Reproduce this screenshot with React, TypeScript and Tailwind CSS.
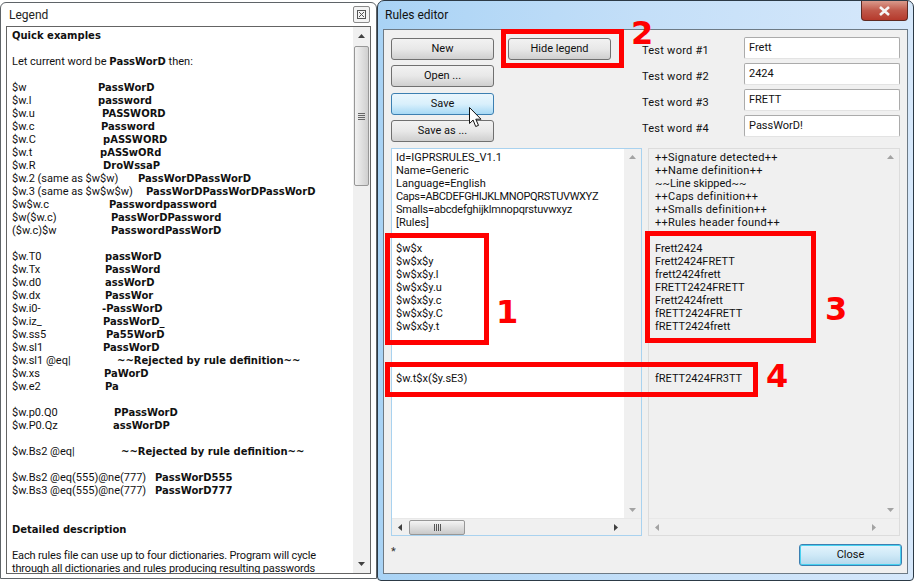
import React from 'react';

const legendRows: Array<{ label?: string; value?: string; w?: string }> = [
  { label: '$w', value: 'PassWorD', w: 'w-[86px]' },
  { label: '$w.l', value: 'password', w: 'w-[86px]' },
  { label: '$w.u', value: 'PASSWORD', w: 'w-[90px]' },
  { label: '$w.c', value: 'Password', w: 'w-[89px]' },
  { label: '$w.C', value: 'pASSWORD', w: 'w-[91px]' },
  { label: '$w.t', value: 'pASSwORd', w: 'w-[88px]' },
  { label: '$w.R', value: 'DroWssaP', w: 'w-[91px]' },
  { label: '$w.2 (same as $w$w)', value: 'PassWorDPassWorD', w: 'w-[126px]' },
  { label: '$w.3 (same as $w$w$w)', value: 'PassWorDPassWorDPassWorD', w: 'w-[134px]' },
  { label: '$w$w.c', value: 'Passwordpassword', w: 'w-[97px]' },
  { label: '$w($w.c)', value: 'PassWorDPassword', w: 'w-[99px]' },
  { label: '($w.c)$w', value: 'PasswordPassWorD', w: 'w-[99px]' },
  {},
  { label: '$w.T0', value: 'passWorD', w: 'w-[93px]' },
  { label: '$w.Tx', value: 'PassWord', w: 'w-[93px]' },
  { label: '$w.d0', value: 'assWorD', w: 'w-[93px]' },
  { label: '$w.dx', value: 'PassWor', w: 'w-[93px]' },
  { label: '$w.i0-', value: '-PassWorD', w: 'w-[90px]' },
  { label: '$w.iz_', value: 'PassWorD_', w: 'w-[91px]' },
  { label: '$w.ss5', value: 'Pa55WorD', w: 'w-[94px]' },
  { label: '$w.sl1', value: 'PassWorD', w: 'w-[91px]' },
  { label: '$w.sl1 @eq|', value: '~~Rejected by rule definition~~', w: 'w-[105px]' },
  { label: '$w.xs', value: 'PaWorD', w: 'w-[92px]' },
  { label: '$w.e2', value: 'Pa', w: 'w-[93px]' },
  {},
  { label: '$w.p0.Q0', value: 'PPassWorD', w: 'w-[102px]' },
  { label: '$w.P0.Qz', value: 'assWorDP', w: 'w-[101px]' },
  {},
  { label: '$w.Bs2 @eq|', value: '~~Rejected by rule definition~~', w: 'w-[109px]' },
  {},
  { label: '$w.Bs2 @eq(555)@ne(777)', value: 'PassWorD555', w: 'w-[143px]' },
  { label: '$w.Bs3 @eq(555)@ne(777)', value: 'PassWorD777', w: 'w-[143px]' },
];

const ruleLines = [
  'Id=IGPRSRULES_V1.1',
  'Name=Generic',
  'Language=English',
  'Caps=ABCDEFGHIJKLMNOPQRSTUVWXYZ',
  'Smalls=abcdefghijklmnopqrstuvwxyz',
  '[Rules]',
  '',
  '$w$x',
  '$w$x$y',
  '$w$x$y.l',
  '$w$x$y.u',
  '$w$x$y.c',
  '$w$x$y.C',
  '$w$x$y.t',
  '',
  '',
  '',
  '$w.t$x($y.sE3)',
];

const resultLines = [
  '++Signature detected++',
  '++Name definition++',
  '~~Line skipped~~',
  '++Caps definition++',
  '++Smalls definition++',
  '++Rules header found++',
  '',
  'Frett2424',
  'Frett2424FRETT',
  'frett2424frett',
  'FRETT2424FRETT',
  'Frett2424frett',
  'fRETT2424FRETT',
  'fRETT2424frett',
  '',
  '',
  '',
  'fRETT2424FR3TT',
];

const boldText = "font-['DejaVu_Sans',sans-serif] text-[10px] font-bold";

const Arrow = ({ dir, dim }: { dir: 'up' | 'down' | 'left' | 'right'; dim?: boolean }) => {
  const points = {
    up: '1,6 4.5,2 8,6',
    down: '1,3 4.5,7 8,3',
    left: '6,1 2,4.5 6,8',
    right: '3,1 7,4.5 3,8',
  }[dir];
  return (
    <svg width="9" height="9" viewBox="0 0 9 9">
      <polygon points={points} fill={dim ? '#a3a3a3' : '#404040'} />
    </svg>
  );
};

const Button = ({ label, state, className }: { label: string; state?: 'hot' | 'default'; className?: string }) => {
  const look =
    state === 'hot'
      ? 'border-[#3c7fb1] from-[#eaf6fd] via-[#d9f0fc] to-[#a7d9f5]'
      : state === 'default'
        ? 'border-[#3c7fb1] from-[#e4f4fc] via-[#cfe9f7] to-[#b4d8ec] shadow-[inset_0_0_0_1px_#48d1f0]'
        : 'border-[#707070] from-[#f2f2f2] via-[#e8e8e8] to-[#cfcfcf]';
  return (
    <button
      className={`flex h-[22px] w-[103px] items-center justify-center rounded-[3px] border bg-linear-to-b pt-[1px] text-[#111] ${look} ${className ?? ''}`}
    >
      {label}
    </button>
  );
};

const Pane = ({
  lines,
  className,
  textClass,
  active,
}: {
  lines: string[];
  className: string;
  textClass: string;
  active?: boolean;
}) => (
  <div className={`flex h-[388px] flex-col border ${className}`}>
    <div className="flex min-h-0 flex-1">
      <div className={`flex-1 overflow-hidden pt-[2px] leading-[13px] text-[#111] ${textClass}`}>
        {lines.map((line, i) => (
          <div
            key={i}
            className={`h-[13px] whitespace-nowrap ${
              line.startsWith('Caps=')
                ? 'tracking-[-0.33px]'
                : line.startsWith('Smalls=')
                  ? 'tracking-[-0.18px]'
                  : line.startsWith('++')
                    ? 'tracking-[0.25px]'
                    : ''
            }`}
          >
            {line}
          </div>
        ))}
      </div>
      <div className="flex w-[17px] flex-col items-center justify-between bg-[#f0f0f0] py-[4px]">
        <Arrow dir="up" dim />
        <Arrow dir="down" dim />
      </div>
    </div>
    <div className="flex h-[17px] items-center border-t border-[#e8e8e8] bg-[#f0f0f0] pr-[17px]">
      <div className="flex w-[17px] justify-center">
        <Arrow dir="left" dim={!active} />
      </div>
      <div className="flex-1">
        {active && (
          <div className="flex h-[15px] w-[56px] items-center justify-center rounded-[2px] border border-[#979797] bg-linear-to-b from-[#f4f4f4] to-[#c9c9c9]">
            <div className="flex gap-[1px]">
              <span className="h-[7px] w-[1px] bg-[#555]" />
              <span className="h-[7px] w-[1px] bg-[#555]" />
              <span className="h-[7px] w-[1px] bg-[#555]" />
              <span className="h-[7px] w-[1px] bg-[#555]" />
            </div>
          </div>
        )}
      </div>
      <div className="flex w-[17px] justify-center">
        <Arrow dir="right" dim={!active} />
      </div>
    </div>
  </div>
);

const RedBox = ({ className }: { className: string }) => (
  <div className={`absolute border-[5px] border-[#ff0000] ${className}`} />
);

const RedNum = ({ n, className }: { n: string; className: string }) => (
  <div className={`absolute font-['DejaVu_Sans',sans-serif] text-[32px] leading-none font-bold text-[#ff0000] ${className}`}>
    {n}
  </div>
);

const LegendWindow = () => (
  <div className="flex h-[577px] w-[377px] flex-col rounded-t-[6px] border border-[#5f6468] bg-white px-[5px] pb-[4px]">
    <div className="flex h-[23px] items-center justify-between pl-[3px]">
      <span className="text-[12px] text-[#222]">Legend</span>
      <div className="mr-[1px] flex h-[17px] w-[17px] items-center justify-center rounded-[2px] border border-[#8a8a8a] bg-[#f4f4f4]">
        <svg width="9" height="9" viewBox="0 0 9 9" fill="none" stroke="#555">
          <rect x="0.5" y="0.5" width="8" height="8" />
          <path d="M2 2l5 5M7 2l-5 5" />
        </svg>
      </div>
    </div>
    <div className="flex min-h-0 flex-1 border border-[#646464]">
      <div className="flex-1 overflow-hidden pt-[2px] pl-[5px] leading-[13px] text-[#111]">
        <div className={`h-[13px] ${boldText}`}>Quick examples</div>
        <div className="h-[13px]" />
        <div className="h-[13px]">
          Let current word be <span className={boldText}>PassWorD</span> then:
        </div>
        <div className="h-[13px]" />
        {legendRows.map((row, i) => (
          <div key={i} className="flex h-[13px] whitespace-nowrap">
            <span className={`shrink-0 ${row.w ?? ''}`}>{row.label}</span>
            <span className={boldText}>{row.value}</span>
          </div>
        ))}
        <div className="h-[26px]" />
        <div className={`h-[13px] ${boldText}`}>Detailed description</div>
        <div className="h-[13px]" />
        <div className="whitespace-nowrap tracking-[-0.15px]">
          Each rules file can use up to four dictionaries. Program will cycle
        </div>
        <div className="whitespace-nowrap tracking-[-0.15px]">
          through all dictionaries and rules producing resulting passwords
        </div>
      </div>
      <div className="flex w-[17px] shrink-0 flex-col items-center bg-[#f0f0f0]">
        <div className="flex h-[19px] items-center">
          <Arrow dir="up" />
        </div>
        <div className="flex h-[140px] w-[15px] flex-col items-center justify-center gap-[1px] rounded-[2px] border border-[#979797] bg-linear-to-r from-[#f2f2f2] to-[#cfcfcf]">
          <span className="h-[1px] w-[7px] bg-[#666]" />
          <span className="h-[1px] w-[7px] bg-[#666]" />
          <span className="h-[1px] w-[7px] bg-[#666]" />
          <span className="h-[1px] w-[7px] bg-[#666]" />
        </div>
        <div className="mt-auto flex h-[19px] items-center">
          <Arrow dir="down" />
        </div>
      </div>
    </div>
  </div>
);

const testWords = [
  { label: 'Test word #1', value: 'Frett' },
  { label: 'Test word #2', value: '2424' },
  { label: 'Test word #3', value: 'FRETT' },
  { label: 'Test word #4', value: 'PassWorD!' },
];

const RulesWindow = () => (
  <div className="flex h-[581px] w-[537px] flex-col rounded-t-[7px] rounded-b-[4px] border border-[#2c3a46] bg-linear-to-r from-[#a9d3f5] via-[#c4dff8] to-[#d6e8fb] px-[5px] pb-[6px]">
    <div className="flex h-[28px] shrink-0 items-start justify-between">
      <span className="mt-[7px] ml-[2px] text-[12px] leading-[14px] text-[#111]">Rules editor</span>
      <div className="flex h-[20px] w-[47px] items-center justify-center rounded-b-[4px] border border-t-0 border-[#5e2a22] bg-linear-to-b from-[#d99a8c] via-[#c0584a] to-[#b5392c]">
        <svg width="11" height="10" viewBox="0 0 11 10">
          <path d="M1 1l9 8M10 1l-9 8" stroke="#f5f5f5" strokeWidth="2.6" />
        </svg>
      </div>
    </div>
    <div className="flex min-h-0 flex-1 flex-col border border-[#6d7a85] bg-[#f0f0f0] pt-[8px] pr-[7px] pl-[7px]">
      <div className="flex h-[110px] shrink-0">
        <div className="flex w-[103px] flex-col">
          <Button label="New" />
          <Button label="Open ..." className="mt-[5px]" />
          <Button label="Save" state="hot" className="mt-[6px]" />
          <Button label="Save as ..." className="mt-[5px]" />
        </div>
        <Button label="Hide legend" className="ml-[14px]" />
        <div className="-mt-[1px] ml-[31px] flex flex-col gap-[4px]">
          {testWords.map(word => (
            <div key={word.label} className="flex h-[22px] items-center">
              <span className="w-[102px] pt-[6px] tracking-[0.25px] text-[#111]">{word.label}</span>
              <div className="h-[22px] w-[156px] rounded-[2px] border border-[#ababab] border-b-[#e3e3e3] bg-white pt-[3px] pl-[4px] leading-[14px] text-[#111]">
                {word.value}
              </div>
            </div>
          ))}
        </div>
      </div>
      <div className="flex gap-[6px]">
        <div className="w-[251px]">
          <Pane lines={ruleLines} active className="border-[#a9d2ef] bg-white" textClass="pl-[4px]" />
        </div>
        <div className="w-[252px]">
          <Pane lines={resultLines} className="border-[#dcdcdc] bg-[#f0f0f0]" textClass="pl-[6px]" />
        </div>
      </div>
      <div className="flex flex-1 items-start justify-between pt-[8px]">
        <span className="text-[#333]">*</span>
        <Button label="Close" state="default" className="mr-[-2px]" />
      </div>
    </div>
  </div>
);

export default function App() {
  return (
    <div className="relative flex h-[581px] w-[914px] overflow-hidden bg-white font-['Roboto',sans-serif] text-[11px]">
      <div className="pt-[2px]">
        <LegendWindow />
      </div>
      <RulesWindow />

      <RedBox className="top-[29px] left-[501px] h-[39px] w-[123px]" />
      <RedBox className="top-[233px] left-[385px] h-[112px] w-[104px]" />
      <RedBox className="top-[231px] left-[645px] h-[112px] w-[171px]" />
      <RedBox className="top-[362px] left-[385px] h-[35px] w-[373px]" />
      <RedNum n="2" className="top-[17px] left-[631px]" />
      <RedNum n="1" className="top-[296px] left-[496px]" />
      <RedNum n="3" className="top-[293px] left-[825px]" />
      <RedNum n="4" className="top-[360px] left-[766px]" />

      <svg className="absolute top-[107px] left-[469px]" width="13" height="21" viewBox="0 0 13 21">
        <path d="M0.5 0.5v16l3.6-3.4 2.6 6.4 2.8-1.1-2.7-6.2h5.2z" fill="#fff" stroke="#111" />
      </svg>
    </div>
  );
}
